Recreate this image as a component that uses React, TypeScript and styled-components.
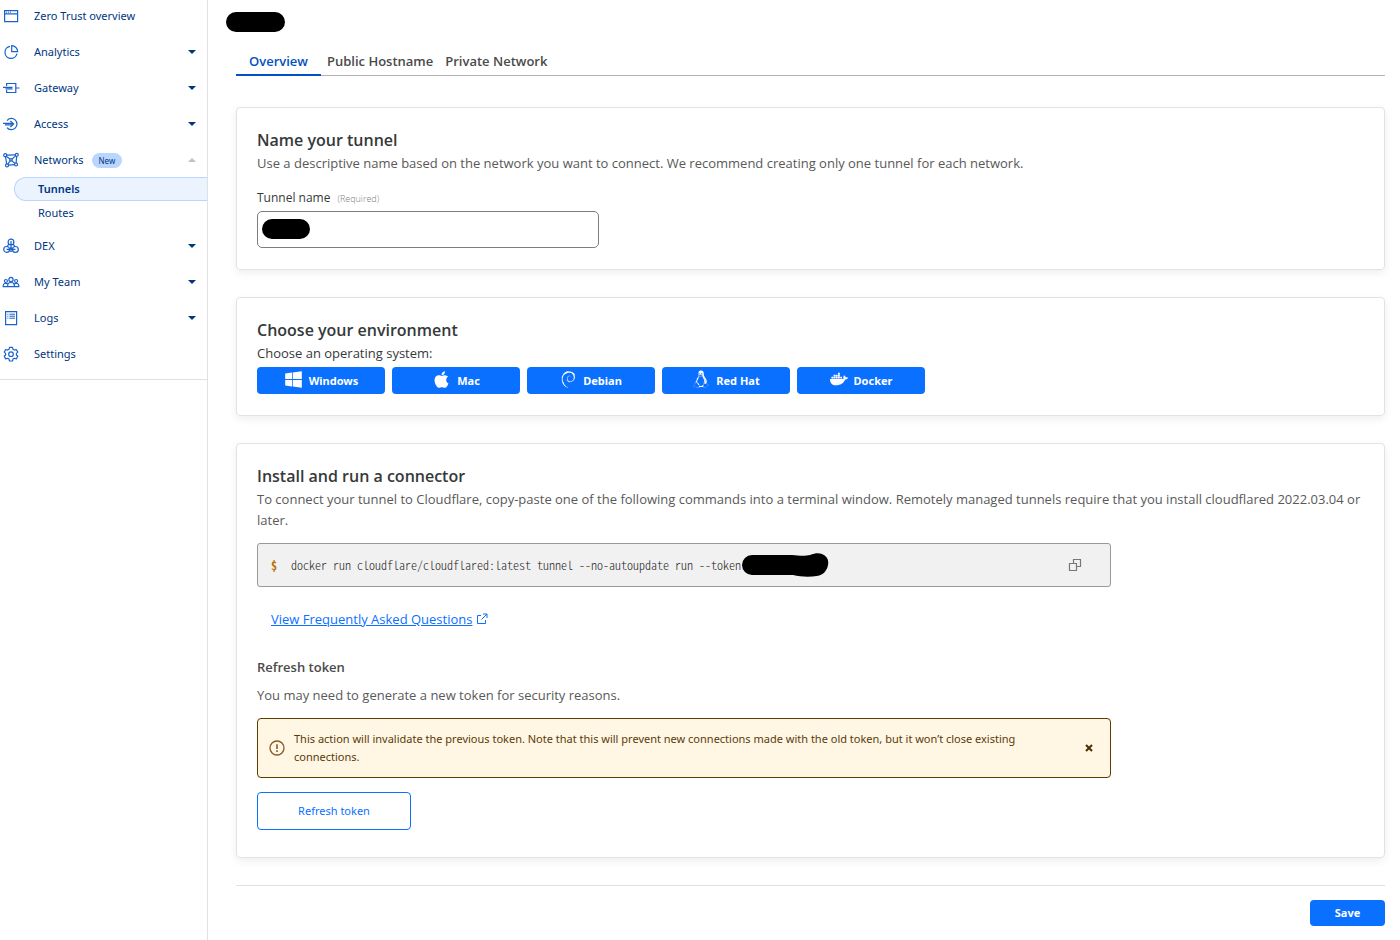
import React from "react";
import styled, { createGlobalStyle } from "styled-components";
import { FaWindows, FaApple, FaDocker } from "react-icons/fa";
import { SiDebian } from "react-icons/si";
import { DiLinux } from "react-icons/di";

const GlobalStyle = createGlobalStyle`
  *, *::before, *::after { box-sizing: border-box; }
  body {
    margin: 0;
    background: #fff;
    color: #4a4a4a;
    font-family: "Open Sans", "Noto Sans", sans-serif;
    font-size: 13px;
    line-height: 20px;
  }
  h1, h2, h3, p, ul { margin: 0; padding: 0; }
  ul { list-style: none; }
  button, input { font: inherit; }
`;

const compactFont = `"Noto Sans", "Open Sans", sans-serif`;

const Page = styled.div`
  display: flex;
  min-height: 100vh;
`;

/* ---------- Sidebar ---------- */

const Sidebar = styled.aside`
  flex: 0 0 208px;
  border-right: 1px solid #dfe1e2;
  font-family: ${compactFont};
  font-size: 11px;
`;

const NavList = styled.ul`
  display: flex;
  flex-direction: column;
  gap: 4px;
  padding-bottom: 9px;
  border-bottom: 1px solid #dfe1e2;
`;

const NavLink = styled.a`
  display: flex;
  align-items: center;
  height: 32px;
  padding: 0 11px 0 2px;
  color: #003681;
  text-decoration: none;
`;

const NavIcon = styled.svg`
  width: 18px;
  height: 18px;
  margin-right: 14px;
  fill: none;
  stroke: #1a62cc;
  stroke-width: 1.2;
`;

const NewBadge = styled.span`
  margin-left: 8px;
  padding: 0 7px;
  border-radius: 8px;
  background: #b9d6ff;
  font-size: 8px;
  line-height: 15px;
`;

const Caret = styled.span<{ $open?: boolean }>`
  width: 8px;
  height: 4px;
  margin-left: auto;
  background: ${(p) => (p.$open ? "#b6c2cf" : "#003681")};
  clip-path: ${(p) =>
    p.$open ? "polygon(50% 0, 100% 100%, 0 100%)" : "polygon(0 0, 100% 0, 50% 100%)"};
`;

const SubList = styled.ul`
  padding: 1px 0;
`;

const SubLink = styled.a<{ $active?: boolean }>`
  display: block;
  height: 24px;
  margin-left: 14px;
  padding-left: 23px;
  border: 1px solid ${(p) => (p.$active ? "#b9d6ff" : "transparent")};
  border-right: 0;
  border-radius: 12px 0 0 12px;
  background: ${(p) => (p.$active ? "#ebf3ff" : "transparent")};
  color: #003681;
  font-weight: ${(p) => (p.$active ? 600 : 400)};
  line-height: 22px;
  text-decoration: none;
`;

/* ---------- Main column ---------- */

const Main = styled.main`
  flex: 1;
  min-width: 0;
  padding: 12px 15px 14px 28px;
`;

const Redacted = styled.span<{ $w: number }>`
  display: block;
  width: ${(p) => p.$w}px;
  height: 20px;
  border-radius: 10px;
  background: #000;
`;

const Title = styled.h1`
  margin-left: -10px;
`;

const Tabs = styled.nav`
  display: flex;
  height: 30px;
  margin: 14px 0 31px;
  border-bottom: 1px solid #b3b3b3;
`;

const Tab = styled.a<{ $active?: boolean }>`
  height: 30px;
  padding: 0 ${(p) => (p.$active ? 13 : 6)}px;
  border-bottom: 2px solid ${(p) => (p.$active ? "#0051c3" : "transparent")};
  color: ${(p) => (p.$active ? "#0051c3" : "#4a4a4a")};
  font-weight: 600;
  line-height: 30px;
  text-decoration: none;
`;

const Card = styled.section`
  margin-bottom: 27px;
  padding: 20px 20px 21px;
  border: 1px solid #e2e2e2;
  border-radius: 4px;
  box-shadow: 0 3px 8px rgba(0, 0, 0, 0.07);
`;

const CardTitle = styled.h2`
  color: #36393a;
  font-size: 16px;
  font-weight: 600;
  line-height: 25px;
`;

const Text = styled.p<{ $strong?: boolean }>`
  color: ${(p) => (p.$strong ? "#36393a" : "#595959")};
  line-height: 21px;
`;

const Label = styled.label`
  display: block;
  margin-top: 14px;
  color: #36393a;
  font-size: 12px;
`;

const Required = styled.small`
  margin-left: 7px;
  color: #7d7d7d;
  font-size: 9px;
  font-weight: 300;
`;

const FieldBox = styled.div`
  position: relative;
  width: 342px;
  max-width: 100%;
  margin-top: 2px;
`;

const Input = styled.input`
  display: block;
  width: 100%;
  height: 37px;
  padding: 0 10px;
  border: 1px solid #7d7d7d;
  border-radius: 5px;
  background: #fff;
`;

const FieldMask = styled.span`
  position: absolute;
  top: 8px;
  left: 5px;
`;

const Systems = styled.div`
  display: flex;
  flex-wrap: wrap;
  gap: 7px;
  margin-top: 3px;
`;

const PrimaryButton = styled.button<{ $w: number; $h: number }>`
  display: flex;
  align-items: center;
  justify-content: center;
  gap: 6px;
  width: ${(p) => p.$w}px;
  height: ${(p) => p.$h}px;
  padding: 0;
  border: 0;
  border-radius: 4px;
  background: #0a70ff;
  color: #fff;
  font-family: ${compactFont};
  font-size: 11px;
  font-weight: 700;

  svg { margin-bottom: 3px; }
`;

const Narrow = styled.div`
  max-width: 854px;
`;

const CodeBlock = styled.div`
  display: flex;
  align-items: center;
  height: 44px;
  margin-top: 12px;
  padding: 0 28px 0 13px;
  border: 1px solid #999;
  border-radius: 3px;
  background: #f1f1f1;
`;

const Code = styled.code`
  color: #222;
  font-family: "Noto Sans CJK JP", "Liberation Mono", monospace;
  font-feature-settings: "hwid";
  font-variant-ligatures: none;
  font-size: 12px;
  font-weight: 300;
  line-height: 20px;
  white-space: nowrap;
`;

const Prompt = styled(Code)`
  width: 20px;
  color: #b9700b;
  font-weight: 700;
`;

const TokenMask = styled.svg`
  flex: none;
  width: 88px;
  height: 24px;
`;

const IconButton = styled.button`
  display: flex;
  margin-left: auto;
  padding: 0;
  border: 0;
  background: none;
  color: inherit;
`;

const FaqLink = styled.a`
  display: inline-flex;
  align-items: center;
  gap: 4px;
  margin: 22px 0 0 14px;
  color: #0a70ff;
  text-decoration: underline;
`;

const SubTitle = styled.h3`
  margin: 28px 0 8px;
  color: #4a4a4a;
  font-size: 13px;
  font-weight: 600;
`;

const Alert = styled.div`
  display: flex;
  align-items: center;
  height: 60px;
  margin: 12px 0 14px;
  padding: 0 16px 0 11px;
  border: 1px solid #5a3b00;
  border-radius: 4px;
  background: #fff7e4;
  color: #5b3a0a;
  font-family: ${compactFont};
  font-size: 11px;
  line-height: 18px;
`;

const AlertText = styled.p`
  flex: 1;
  margin: 0 32px 0 9px;
`;

const OutlineButton = styled.button`
  display: block;
  width: 154px;
  height: 38px;
  margin-bottom: 6px;
  border: 1px solid #0a70ff;
  border-radius: 4px;
  background: #fff;
  color: #0a70ff;
  font-family: ${compactFont};
  font-size: 11px;
`;

const Footer = styled.footer`
  display: flex;
  justify-content: flex-end;
  padding-top: 14px;
  border-top: 1px solid #dfe1e2;
`;

/* ---------- Sidebar icons, on an 18 x 18 grid ---------- */

const icons: Record<string, React.ReactNode> = {
  overview: (
    <>
      <path d="M2.6 3.6h13v11h-13zM2.6 6.8h13" />
      <path d="M4 5.2h1M6 5.2h1M8 5.2h1" strokeWidth="1" />
    </>
  ),
  analytics: (
    <>
      <path d="M8 3.3a6.1 6.1 0 1 0 7 7.4" />
      <path d="M9.700 2.700v6h6a6 6 0 0 0-6-6z" />
    </>
  ),
  gateway: (
    <>
      <path d="M4.600 7V4.500h9.200v9H4.600V11M13.800 9H17.500" />
      <path d="M1 8.300h9.500M3.500 9.900h7" />
    </>
  ),
  access: (
    <>
      <path d="M5 5.500a5.600 5.600 0 1 1 0 7" />
      <path d="M1 8.300h10M3 9.900h8" />
      <path d="M8.400 6l3.200 3-3.200 3" />
    </>
  ),
  networks: (
    <>
      <circle cx="3.200" cy="4.200" r="1.500" />
      <circle cx="14.800" cy="3.800" r="1.500" />
      <circle cx="5" cy="14.400" r="1.500" />
      <circle cx="14" cy="13.400" r="1.500" />
      <circle cx="9" cy="8.800" r="1.200" />
      <path d="M4.700 4.200l8.600-.3M3.500 5.700l1.200 7.200M14.700 5.300l-.6 6.600M6.500 14.200l6-.6M4.300 5.300L8 8M13.700 4.900L10 8M5.900 13.200l2.400-3.500M12.900 12.400L9.800 9.700" />
    </>
  ),
  dex: (
    <>
      <circle cx="9" cy="5" r="2.900" />
      <circle cx="4.600" cy="12.400" r="2.900" />
      <circle cx="13.400" cy="12.400" r="2.900" />
      <path d="M9 4v8.400M4.600 12.400h8.800M6.800 7l-1.600 2.600M11.200 7l1.600 2.600M7.500 12.400a1.500 2 0 0 1 3 0a1.500 2 0 0 1-3 0" />
    </>
  ),
  team: (
    <>
      <circle cx="9" cy="6.400" r="2.100" />
      <circle cx="3.900" cy="8" r="1.500" />
      <circle cx="14.100" cy="8" r="1.500" />
      <path d="M5.700 13.700v-1.500a3.300 2.700 0 0 1 6.600 0v1.500zM5.400 13.700H1.200v-1.200a2.600 2.200 0 0 1 4.200-1.700M12.600 13.700h4.200v-1.200a2.600 2.200 0 0 0-4.200-1.700" />
    </>
  ),
  logs: (
    <>
      <path d="M3.600 2.600h11v13h-11z" />
      <path d="M5.400 5.200h1M7.400 5.200h5.600M5.400 7.200h1M7.400 7.200h5.600M5.400 9.200h1M7.400 9.200h5.600" strokeWidth="1" />
    </>
  ),
  settings: (
    <>
      <path d="M7.500 2.400h3l.5 1.900 1.400.8 1.900-.6 1.500 2.600-1.400 1.300v1.600l1.400 1.300-1.500 2.600-1.900-.6-1.400.8-.5 1.900h-3L7 14.100l-1.400-.8-1.900.6-1.500-2.600L3.600 10V8.400L2.200 7.100l1.500-2.600 1.900.6L7 4.300z" strokeLinejoin="round" />
      <circle cx="9" cy="9.200" r="2.300" />
    </>
  ),
};

interface NavItem {
  label: string;
  icon: string;
  caret?: "down" | "up";
  badge?: string;
  children?: string[];
}

const navItems: NavItem[] = [
  { label: "Zero Trust overview", icon: "overview" },
  { label: "Analytics", icon: "analytics", caret: "down" },
  { label: "Gateway", icon: "gateway", caret: "down" },
  { label: "Access", icon: "access", caret: "down" },
  { label: "Networks", icon: "networks", caret: "up", badge: "New", children: ["Tunnels", "Routes"] },
  { label: "DEX", icon: "dex", caret: "down" },
  { label: "My Team", icon: "team", caret: "down" },
  { label: "Logs", icon: "logs", caret: "down" },
  { label: "Settings", icon: "settings" },
];

const systems = [
  { name: "Windows", icon: <FaWindows size={19} /> },
  { name: "Mac", icon: <FaApple size={19} /> },
  { name: "Debian", icon: <SiDebian size={17} /> },
  { name: "Red Hat", icon: <DiLinux size={18} /> },
  { name: "Docker", icon: <FaDocker size={18} /> },
];

export default function App() {
  return (
    <Page>
      <GlobalStyle />
      <Sidebar>
        <nav aria-label="Zero Trust">
          <NavList>
            {navItems.map((item) => (
              <li key={item.label}>
                <NavLink href="#">
                  <NavIcon viewBox="0 0 18 18" aria-hidden="true">
                    {icons[item.icon]}
                  </NavIcon>
                  {item.label}
                  {item.badge && <NewBadge>{item.badge}</NewBadge>}
                  {item.caret && <Caret $open={item.caret === "up"} />}
                </NavLink>
                {item.children && (
                  <SubList>
                    {item.children.map((child) => (
                      <li key={child}>
                        <SubLink href="#" $active={child === "Tunnels"}>
                          {child}
                        </SubLink>
                      </li>
                    ))}
                  </SubList>
                )}
              </li>
            ))}
          </NavList>
        </nav>
      </Sidebar>

      <Main>
        <Title>
          <Redacted $w={59} />
        </Title>
        <Tabs>
          <Tab href="#" $active>Overview</Tab>
          <Tab href="#">Public Hostname</Tab>
          <Tab href="#">Private Network</Tab>
        </Tabs>

        <Card>
          <CardTitle>Name your tunnel</CardTitle>
          <Text>
            Use a descriptive name based on the network you want to connect. We recommend creating only one
            tunnel for each network.
          </Text>
          <Label htmlFor="tunnel-name">
            Tunnel name<Required>(Required)</Required>
          </Label>
          <FieldBox>
            <Input id="tunnel-name" type="text" />
            <FieldMask>
              <Redacted $w={48} />
            </FieldMask>
          </FieldBox>
        </Card>

        <Card>
          <CardTitle>Choose your environment</CardTitle>
          <Text $strong>Choose an operating system:</Text>
          <Systems>
            {systems.map((s) => (
              <PrimaryButton key={s.name} type="button" $w={128} $h={27}>
                {s.icon}
                {s.name}
              </PrimaryButton>
            ))}
          </Systems>
        </Card>

        <Card>
          <CardTitle>Install and run a connector</CardTitle>
          <Text>
            To connect your tunnel to Cloudflare, copy-paste one of the following commands into a terminal
            window. Remotely managed tunnels require that you install cloudflared 2022.03.04 or later.
          </Text>
          <Narrow>
            <CodeBlock>
              <Prompt>$</Prompt>
              <Code>docker run cloudflare/cloudflared:latest tunnel --no-autoupdate run --token</Code>
              <TokenMask viewBox="0 0 88 24" aria-hidden="true">
                <path d="M11 2h40c8 1 14 1 18 0 5-2 9-2 12-1 5 2 7 6 6 11-1 6-5 10-11 11-7 1-16 1-24-1H11A10 10 0 0 1 11 2z" />
              </TokenMask>
              <IconButton type="button" aria-label="Copy command">
                <svg width="14" height="14" viewBox="0 0 14 14" fill="none" stroke="#777" aria-hidden="true">
                  <path d="M1.500 5.500h7v7h-7zM5.500 5.500v-4h7v7h-4" strokeWidth="1.200" />
                </svg>
              </IconButton>
            </CodeBlock>
            <FaqLink href="#">
              View Frequently Asked Questions
              <svg width="12" height="12" viewBox="0 0 12 12" fill="none" stroke="currentColor" aria-hidden="true">
                <path d="M5 2.500H1.500v8h8V7M7 1h4v4M11 1L5.500 6.500" />
              </svg>
            </FaqLink>
            <SubTitle>Refresh token</SubTitle>
            <Text>You may need to generate a new token for security reasons.</Text>
            <Alert role="alert">
              <svg width="16" height="16" viewBox="0 0 16 16" fill="none" stroke="#855a26" aria-hidden="true">
                <circle cx="8" cy="8" r="7" strokeWidth="1.300" />
                <path d="M8 4.200v4.800M8 10.300v1.600" strokeWidth="1.600" />
              </svg>
              <AlertText>
                This action will invalidate the previous token. Note that this will prevent new connections made
                with the old token, but it won’t close existing connections.
              </AlertText>
              <IconButton type="button" aria-label="Dismiss">
                <svg width="10" height="10" viewBox="0 0 10 10" stroke="#4a2f00" strokeWidth="2" aria-hidden="true">
                  <path d="M2 2l6 6M8 2L2 8" />
                </svg>
              </IconButton>
            </Alert>
            <OutlineButton type="button">Refresh token</OutlineButton>
          </Narrow>
        </Card>

        <Footer>
          <PrimaryButton type="submit" $w={75} $h={26}>Save</PrimaryButton>
        </Footer>
      </Main>
    </Page>
  );
}
